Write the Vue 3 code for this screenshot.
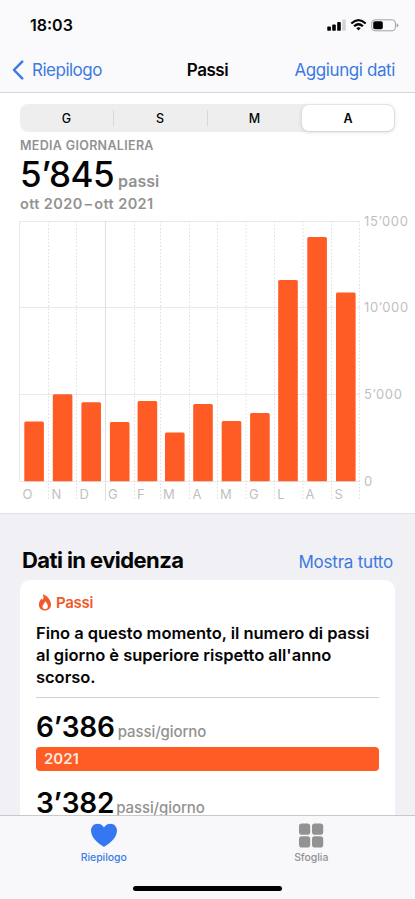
<script setup>
const ranges = ['G', 'S', 'M', 'A']
const selectedRange = 'A'

const months = [
  { label: 'O', x: 24.3, top: 421.5, labelX: 22.4 },
  { label: 'N', x: 52.8, top: 394.3, labelX: 51.4 },
  { label: 'D', x: 81.4, top: 402.2, labelX: 79.4 },
  { label: 'G', x: 109.9, top: 422, labelX: 108 },
  { label: 'F', x: 137.6, top: 401, labelX: 137 },
  { label: 'M', x: 165, top: 432.4, labelX: 163 },
  { label: 'A', x: 193.2, top: 404, labelX: 192.4 },
  { label: 'M', x: 221.7, top: 421, labelX: 219.9 },
  { label: 'G', x: 250.1, top: 413, labelX: 249 },
  { label: 'L', x: 278.2, top: 280, labelX: 277.2 },
  { label: 'A', x: 307.3, top: 237, labelX: 305.6 },
  { label: 'S', x: 336, top: 292.5, labelX: 334.6 },
]
const dashed = [48.5, 76.5, 134.5, 160.5, 189.5, 217.5, 246, 274.5, 303, 331.5, 359.5]
const levels = [
  { y: 221.5, label: '15’000' },
  { y: 307.5, label: '10’000' },
  { y: 394.5, label: '5’000' },
  { y: 481.5, label: '0' },
]
</script>

<template>
  <div class="screen">
    <header class="top">
      <div class="status">
        <span class="clock">18:03</span>
        <svg class="signals" width="72" height="16" viewBox="0 0 72 16">
          <g fill="#000">
            <rect x="0.3" y="9.4" width="3.6" height="4.4" rx="0.9" />
            <rect x="5.2" y="7.5" width="3.6" height="6.3" rx="0.9" />
            <rect x="10.2" y="5.1" width="3.6" height="8.7" rx="0.9" />
            <rect x="15.2" y="2.5" width="3.6" height="11.3" rx="0.9" fill="#d3d3d5" />
          </g>
          <g fill="none" stroke="#000" stroke-width="2.2">
            <path d="M24.3 6.5Q31.5-.2 38.7 6.5" />
            <path d="M27.1 9.3Q31.5 5.2 35.9 9.3" />
          </g>
          <path d="M29.2 11.1Q31.5 9.2 33.8 11.1L31.5 13.5Z" />
          <rect x="44.7" y="2.8" width="23.7" height="11" rx="3.2" fill="none" stroke="#a2a2a5" />
          <rect x="46.2" y="4.3" width="9.6" height="8" rx="1.7" />
          <path d="M69.6 6.2Q71.4 7 71.4 8.3T69.6 10.4Z" fill="#a2a2a5" />
        </svg>
      </div>
      <nav class="nav">
        <a class="back">
          <svg width="12" height="20" viewBox="0 0 12 20"><path d="M10.2 1.6 2 10l8.2 8.4" fill="none" stroke="#3b7ae0" stroke-width="2.5" stroke-linecap="round" stroke-linejoin="round" /></svg>
          <span>Riepilogo</span>
        </a>
        <h1>Passi</h1>
        <a class="add">Aggiungi dati</a>
      </nav>
    </header>

    <section class="summary">
      <div class="segments">
        <div v-for="r in ranges" :key="r" class="segment" :class="{ active: r === selectedRange }">{{ r }}</div>
      </div>
      <div class="caption">MEDIA GIORNALIERA</div>
      <div class="average"><strong>5’845</strong><span>passi</span></div>
      <div class="period">ott 2020<i>–</i>ott 2021</div>
      <svg class="chart" width="415" height="298" viewBox="0 208 415 298">
        <g stroke="#e9e9eb">
          <line v-for="l in levels" :key="l.y" x1="19" x2="360" :y1="l.y" :y2="l.y" />
          <line x1="19.5" x2="19.5" y1="221" y2="481" />
          <line x1="105.5" x2="105.5" y1="221" y2="501" stroke="#e0e0e2" />
        </g>
        <g stroke="#dedee0" stroke-dasharray="1.5 2">
          <line v-for="x in dashed" :key="x" :x1="x" :x2="x" y1="221" y2="501" />
        </g>
        <g v-for="m in months" :key="m.x">
          <path :d="`M${m.x} 481.2V${m.top + 1.5}q0-1.5 1.5-1.5h16.6q1.5 0 1.5 1.5V481.2z`" fill="#ff5b24" />
          <text class="month" :x="m.labelX" y="498.6">{{ m.label }}</text>
        </g>
        <text v-for="l in levels" :key="l.label" class="level" x="364" :y="l.y + 4.7">{{ l.label }}</text>
      </svg>
    </section>

    <section class="highlights">
      <div class="heading">
        <h2>Dati in evidenza</h2>
        <a>Mostra tutto</a>
      </div>
      <article class="card">
        <div class="kind">
          <svg width="14" height="17" viewBox="0 0 14 17"><path fill="#f1592a" fill-rule="evenodd" d="M5.4.5C9.6 2 13 6.300 13 10.500c0 3.600-2.400 6-6.100 6-3.600 0-6-2.400-6-5.800 0-2.500 1.100-4.500 2.400-5.800.3-.3.7-.1.8.2l.5 1C5.700 4.700 5.900 2.800 4.900 1.200 4.600.7 4.900.3 5.400.5ZM7.100 15.200c1.700 0 2.700-1.100 2.700-2.700 0-1.900-1-3.900-2.800-5.200-.1 2-2.500 3.300-2.500 5.400 0 1.500 1 2.500 2.600 2.500Z" /></svg>
          <span>Passi</span>
        </div>
        <p>Fino a questo momento, il numero di passi<br />al giorno è superiore rispetto all'anno<br />scorso.</p>
        <div class="rule"></div>
        <div class="metric first"><strong>6’386</strong><span>passi/giorno</span></div>
        <div class="year">2021</div>
        <div class="metric second"><strong>3’382</strong><span>passi/giorno</span></div>
      </article>
    </section>

    <footer class="tabs">
      <div class="tab on">
        <svg width="28" height="26" viewBox="0 0 28 26"><path fill="#3577f1" d="M14 24.8C11.9 23.9 1 17 1 8.7 1 4.500 3.900 1.700 7.600 1.700c2.900 0 5 1.500 6.400 3.800 1.400-2.300 3.500-3.800 6.400-3.800C24.100 1.700 27 4.500 27 8.700 27 17 16.100 23.900 14 24.800Z" /></svg>
        <span>Riepilogo</span>
      </div>
      <div class="tab">
        <svg width="26" height="26" viewBox="0 0 26 26" fill="#929292"><rect x="1" y="1.500" width="11.200" height="11.200" rx="2.800" /><rect x="14" y="1.500" width="11.200" height="11.200" rx="2.800" /><rect x="1" y="14.300" width="11.200" height="11.200" rx="2.800" /><rect x="14" y="14.300" width="11.200" height="11.200" rx="2.800" /></svg>
        <span>Sfoglia</span>
      </div>
      <div class="home"></div>
    </footer>
  </div>
</template>

<style>
body { margin: 0; overflow: hidden; }
</style>

<style scoped>
* { box-sizing: border-box; }
.screen { width: 415px; height: 899px; display: flex; flex-direction: column; overflow: hidden; background: #fff; color: #050505; font-family: Inter, sans-serif; }
.top { height: 93px; flex: none; background: #fafafd; border-bottom: 1px solid #d6d6d9; }
.status { height: 49px; display: flex; justify-content: space-between; padding: 15px 16px 0 30px; }
.clock { font-size: 16px; line-height: 20px; font-weight: 600; letter-spacing: 0; }
.signals { margin-top: 2px; }
.nav { height: 42px; display: grid; grid-template-columns: 1fr auto 1fr; align-items: center; padding: 0 20px; font-size: 17px; letter-spacing: -.4px; }
.nav a, .heading a { color: #3b7ae0; }
.back { display: flex; align-items: center; gap: 8px; margin-left: -8px; letter-spacing: -.5px; }
.nav h1 { margin: 0; font-size: 17px; font-weight: 600; letter-spacing: -.45px; }
.add { text-align: right; }
.summary { height: 421px; flex: none; padding-top: 11px; border-bottom: 1px solid #e2e2e6; }
.segments { height: 28px; margin: 0 20px; display: grid; grid-template-columns: 93px 94px 95px 92px; border-radius: 8px; background: #eeeeef; padding: 1px 0; }
.segment { display: flex; align-items: center; justify-content: center; font-size: 12.5px; font-weight: 500; position: relative; }
.segment + .segment:not(.active)::before { content: ''; position: absolute; left: 0; top: 5px; height: 16px; width: 1px; background: #d8d8da; }
.segment.active { background: #fff; border-radius: 7px; font-weight: 600; box-shadow: 0 1px 4px rgba(0, 0, 0, .17); }
.caption { margin: 5px 20px 0; height: 17px; line-height: 17px; font-size: 12.5px; font-weight: 600; color: #929292; letter-spacing: .32px; }
.average { height: 40px; padding-left: 20px; display: flex; align-items: baseline; gap: 4px; }
.average strong { font-size: 35px; line-height: 40px; font-weight: 500; letter-spacing: -.5px; }
.average span { font-size: 16px; font-weight: 600; color: #929292; }
.period { height: 20px; line-height: 20px; padding-left: 20px; font-size: 14.5px; font-weight: 600; color: #929292; letter-spacing: .4px; }
.period i { font-style: normal; padding: 0 2px; }
.chart { display: block; margin-top: -6px; }
.month { font-size: 13px; fill: #bfbfc1; }
.level { font-size: 13px; fill: #bfbfc1; letter-spacing: .65px; }
.highlights { flex: 1; min-height: 0; overflow: hidden; background: #f0f0f5; padding: 33px 20px 0; }
.heading { height: 33px; display: flex; justify-content: space-between; align-items: baseline; padding: 0 2px; }
.heading h2 { margin: 0; font-size: 22px; line-height: 27px; font-weight: 700; letter-spacing: -.58px; }
.heading a { font-size: 17px; letter-spacing: -.22px; }
.card { height: 260px; background: #fff; border-radius: 10px; padding: 12px 16px; }
.kind { height: 20px; display: flex; align-items: center; gap: 4px; padding-left: 2px; color: #f1592a; font-size: 15px; font-weight: 600; letter-spacing: -.3px; }
.card p { margin: 10px 0 0; height: 66px; font-size: 16.5px; line-height: 22px; font-weight: 600; white-space: nowrap; letter-spacing: -.03px; }
.rule { height: 1px; background: #d2d2d4; margin-top: 9px; }
.metric { display: flex; align-items: baseline; gap: 3px; height: 34px; }
.metric strong { font-size: 28px; line-height: 34px; font-weight: 600; letter-spacing: -.2px; }
.metric span { font-size: 15px; font-weight: 500; color: #929292; letter-spacing: -.1px; }
.metric.first { margin-top: 12px; }
.year { height: 24px; margin-top: 3px; border-radius: 4px; background: #ff5b24; color: #ffe9df; font-size: 15px; line-height: 24px; font-weight: 600; padding-left: 8px; }
.metric.second { margin-top: 15px; gap: 2px; }
.tabs { height: 84px; flex: none; background: #f8f8fa; border-top: 1px solid #c9c9cc; display: grid; grid-template-columns: 1fr 1fr; grid-template-rows: 70px 5px; }
.tab { display: flex; flex-direction: column; align-items: center; padding-top: 6px; color: #929292; font-size: 10.5px; font-weight: 500; line-height: 14px; gap: 3px; letter-spacing: -.05px; }
.tab.on { color: #3f7de5; }
.home { grid-column: 1 / 3; justify-self: center; width: 149px; height: 5px; border-radius: 3px; background: #000; }
</style>
